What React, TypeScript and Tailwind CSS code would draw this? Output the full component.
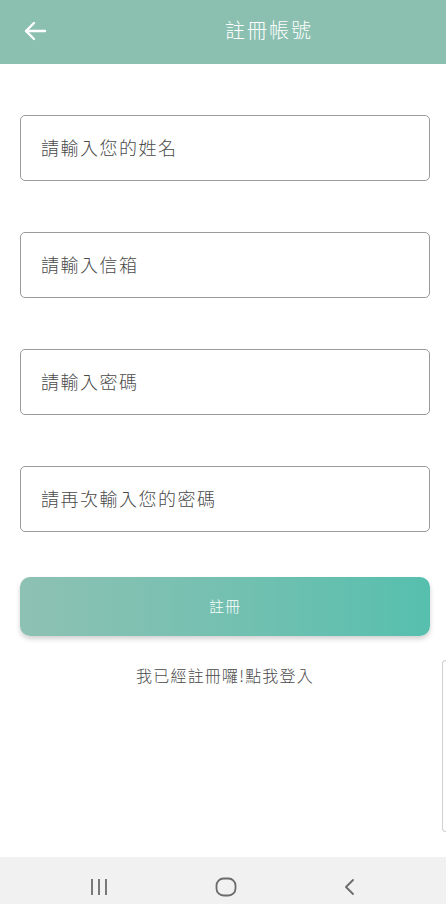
import React from "react";

const font = { fontFamily: '"Noto Sans CJK TC", "Noto Sans", sans-serif' };

function Field({ label }: { label: string }) {
  return (
    <div className="h-[66px] rounded-[5px] border border-[#9a9a9a] flex items-center pl-[20px] pb-[3px]">
      <span className="text-[18px] leading-none font-light text-[#4a4a4a] tracking-[1.5px]">{label}</span>
    </div>
  );
}

export default function App() {
  return (
    <div className="w-[446px] h-[904px] bg-white flex flex-col relative overflow-hidden" style={font}>
      <div className="h-[64px] bg-[#8bc0b1] flex items-center relative shrink-0">
        <div className="absolute left-[23px] top-[20px]">
          <svg width="24" height="22" viewBox="0 0 24 22" fill="none" stroke="white" strokeWidth="2.4" strokeLinecap="round" strokeLinejoin="round">
            <path d="M22 11H3" />
            <path d="M11 3L3 11L11 19" />
          </svg>
        </div>
        <div className="flex-1 text-center text-white text-[20px] leading-none font-light tracking-[2px] pl-[92px] pb-[4px]">註冊帳號</div>
      </div>
      <div className="flex flex-col px-[20px] pt-[51px]">
        <div className="flex flex-col gap-[51px] w-[410px]">
          <Field label="請輸入您的姓名" />
          <Field label="請輸入信箱" />
          <Field label="請輸入密碼" />
          <Field label="請再次輸入您的密碼" />
        </div>
        <div className="mt-[45px] w-[410px] h-[59px] rounded-[10px] bg-gradient-to-r from-[#8dc1b3] to-[#56bfae] shadow-[0_3px_5px_rgba(0,0,0,0.18)] flex items-center justify-center">
          <span className="text-white text-[15px] font-light tracking-[1px]">註冊</span>
        </div>
        <div className="mt-[27px] w-[410px] text-center text-[16px] font-light text-[#4a4a4a] tracking-[1.2px]">我已經註冊囉!點我登入</div>
      </div>
      <div className="absolute right-0 top-[660px] w-[4px] h-[172px] border-l border-t border-b border-[#cfcfcf] rounded-l-[4px]" />
      <div className="mt-auto h-[47px] bg-[#f1f1f1] flex items-center justify-between pl-[89px] pr-[88px] pt-[12px] shrink-0">
        <svg width="20" height="18" viewBox="0 0 20 18" fill="none" stroke="#6b6b6b" strokeWidth="1.8">
          <path d="M3 1V17" />
          <path d="M10 1V17" />
          <path d="M17 1V17" />
        </svg>
        <svg width="22" height="20" viewBox="0 0 22 20" fill="none" stroke="#6b6b6b" strokeWidth="1.8">
          <rect x="1.5" y="1.5" width="19" height="17" rx="7" />
        </svg>
        <svg width="16" height="18" viewBox="0 0 16 18" fill="none" stroke="#6b6b6b" strokeWidth="1.8" strokeLinecap="round" strokeLinejoin="round">
          <path d="M11 2L4 9L11 16" />
        </svg>
      </div>
    </div>
  );
}
